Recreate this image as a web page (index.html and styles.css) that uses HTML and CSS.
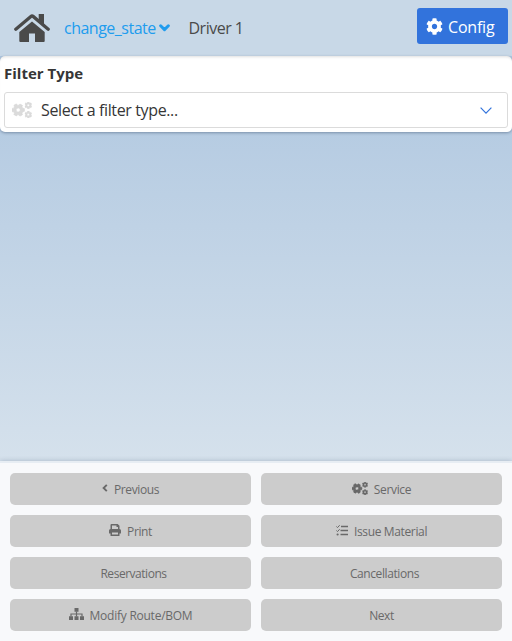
FILE: index.html
```
<!DOCTYPE html>
<html lang="en">
<head>
<meta charset="utf-8">
<title>Driver 1</title>
<link rel="stylesheet" href="styles.css">
</head>
<body>
<svg class="defs" aria-hidden="true">
  <symbol id="cog" viewBox="0 0 512 512"><path d="M487.4 315.7l-42.6-24.6c4.3-23.2 4.3-47 0-70.2l42.6-24.6c4.9-2.8 7.1-8.6 5.5-14-11.1-35.6-30-67.8-54.7-94.6-3.8-4.1-10-5.1-14.8-2.3L380.8 110c-17.9-15.4-38.5-27.3-60.8-35.1V25.8c0-5.6-3.9-10.5-9.4-11.7-36.7-8.2-74.3-7.8-109.2 0-5.5 1.2-9.4 6.1-9.4 11.7V75c-22.2 7.9-42.8 19.8-60.8 35.1L88.7 85.5c-4.9-2.8-11-1.9-14.8 2.3-24.7 26.700-43.600 58.900-54.700 94.600-1.700 5.400.6 11.200 5.500 14L67.300 221c-4.300 23.200-4.300 47 0 70.200l-42.600 24.600c-4.900 2.800-7.100 8.600-5.500 14 11.100 35.600 30 67.800 54.700 94.600 3.800 4.100 10 5.100 14.800 2.300l42.600-24.600c17.900 15.400 38.500 27.300 60.800 35.100v49.200c0 5.600 3.900 10.500 9.400 11.700 36.700 8.200 74.300 7.800 109.200 0 5.500-1.200 9.400-6.100 9.400-11.700v-49.200c22.200-7.900 42.800-19.800 60.800-35.100l42.600 24.600c4.900 2.800 11 1.900 14.800-2.300 24.700-26.700 43.600-58.900 54.700-94.600 1.500-5.500-.7-11.300-5.600-14.100zM256 336c-44.100 0-80-35.900-80-80s35.900-80 80-80 80 35.900 80 80-35.900 80-80 80z"/></symbol>
  <symbol id="cogs" viewBox="0 0 640 512">
    <use class="heavy" href="#cog" x="-10" y="48" width="416" height="416" transform="rotate(30 198 256)"/>
    <use class="heavy" href="#cog" x="402" y="-14" width="240" height="240"/>
    <use class="heavy" href="#cog" x="402" y="286" width="240" height="240"/>
  </symbol>
</svg>
<header class="topbar">
  <svg class="home" viewBox="0 0 36 28"><path d="M24.700 0h5.300v11l-5.300-4.500z"/><path class="roof" d="M1.800 15.200L16.900 2.400q1.100-.9 2.200 0L34.200 15.200"/><path d="M18 7.500L30.700 18V27q0 1-1 1H21v-8.500h-6V28H6.300q-1 0-1-1v-9z"/></svg>
  <a class="state">change_state</a>
  <svg class="caret" viewBox="0 0 10 7"><path d="M1.500 1.500L5 5l3.500-3.500"/></svg>
  <span class="driver">Driver 1</span>
  <button class="config"><svg class="gear"><use href="#cog"/></svg><span>Config</span></button>
</header>
<main class="filter">
  <label class="label">Filter Type</label>
  <div class="select">
    <svg class="filter-icon"><use href="#cogs"/></svg>
    <span class="placeholder">Select a filter type...</span>
    <svg class="chevron" viewBox="0 0 12 7"><path d="M.6.7L6 6.100 11.400.7"/></svg>
  </div>
</main>
<footer class="actions">
  <button class="action"><svg class="prev" viewBox="0 0 6 8"><path d="M4.800.8L1.600 4l3.200 3.200"/></svg><span class="t-previous">Previous</span></button>
  <button class="action"><svg class="cogs"><use href="#cogs"/></svg><span class="t-service">Service</span></button>
  <button class="action"><svg class="print" viewBox="0 0 12 12"><path fill-rule="evenodd" d="M1.500 5V1q0-1 1-1H8.700L10.500 1.800V5Q12 5 12 6.500V9q0 .5-.5.5h-1V11.500q0 .5-.5.5H2q-.5 0-.5-.5v-2h-1Q0 9.500 0 9V6.500Q0 5 1.500 5zM3 1.500V5h6V3H7.500V1.500zM3 8.500v2h6v-2z"/></svg><span class="t-print">Print</span></button>
  <button class="action"><svg class="tasks" viewBox="0 0 12 11"><path d="M5 1.500h7M4.500 5.500H12M4.500 9.500H12"/><path class="ticks" d="M.3 1.400l1.200 1.200L3.700.2M.3 5.400l1.200 1.200 2.200-2.400"/><circle cx="1.600" cy="9.500" r="1.100"/></svg><span class="t-issue">Issue Material</span></button>
  <button class="action no-icon"><span class="t-reservations">Reservations</span></button>
  <button class="action no-icon"><span class="t-cancellations">Cancellations</span></button>
  <button class="action"><svg class="tree" viewBox="0 0 15 12"><path d="M5.500 0h4v3.800h-4zM0 8.200h4V12H0zM5.500 8.200h4V12h-4zM11 8.200h4V12h-4z"/><path class="lines" d="M7.500 3.500v5M2 8.500V6h11v2.500"/></svg><span class="t-modify">Modify Route/BOM</span></button>
  <button class="action"><span class="t-next">Next</span></button>
</footer>
</body>
</html>
```
FILE: styles.css
```
* { box-sizing: border-box; }
body {
  margin: 0;
  height: 641px;
  display: flex;
  flex-direction: column;
  overflow: hidden;
  font-family: "Open Sans", "Noto Sans", sans-serif;
  font-size: 16px;
  line-height: 24px;
  color: #363636;
  background: linear-gradient(#afc7e0 56px, #d5e1ec 461px);
}
button { font: inherit; border: 0; padding: 0; }
svg { display: block; flex: none; fill: currentColor; }
span, a, label { white-space: nowrap; }
.defs { position: absolute; width: 0; height: 0; }
.heavy { stroke: currentColor; stroke-width: 26; }
.topbar {
  height: 56px;
  flex: none;
  display: flex;
  align-items: center;
  padding: 0 4px 0 14px;
  background: #c8d8e7;
  color: #4a4a4a;
}
.home { width: 36px; height: 28px; }
.roof { fill: none; stroke: currentColor; stroke-width: 3.3; stroke-linecap: round; }
.state { width: 92px; margin-left: 14px; color: #209cee; letter-spacing: -.5px; }
.caret { width: 11px; height: 8px; margin-left: 3px; color: #209cee; }
.caret path { fill: none; stroke: currentColor; stroke-width: 2.7; stroke-linecap: round; stroke-linejoin: round; }
.driver { margin-left: 18.5px; letter-spacing: -.5px; }
.config {
  display: flex;
  align-items: center;
  width: 91px;
  height: 36px;
  margin: -4px 0 0 auto;
  padding-left: 9px;
  border-radius: 3px;
  background: #3273dc;
  color: #fff;
}
.config span { margin: 1px 0 0 5px; letter-spacing: -.2px; }
.gear { width: 17px; height: 17px; }
.filter {
  height: 76px;
  flex: none;
  padding: 4px;
  border-radius: 5px;
  background: #fff;
  box-shadow: 0 1px 3px rgba(10, 30, 60, .35), inset 0 3px 3px -2px rgba(0, 0, 0, .13);
}
.label { display: block; height: 32px; line-height: 26px; font-weight: 700; font-size: 15px; }
.select {
  display: flex;
  align-items: center;
  height: 36px;
  padding: 0 15px 0 7px;
  border: 1px solid #dbdbdb;
  border-radius: 3px;
}
.filter-icon { width: 20px; height: 16px; color: #dbdbdb; }
.placeholder { margin-left: 9px; letter-spacing: -.37px; }
.chevron { width: 12px; height: 7px; margin-left: auto; }
.chevron path { fill: none; stroke: #3273dc; stroke-width: 1.2; }
.actions {
  height: 180px;
  flex: none;
  margin-top: auto;
  display: grid;
  grid-template-columns: 1fr 1fr;
  grid-auto-rows: 32px;
  gap: 10px;
  padding: 10px;
  border-top: 2px solid #e7edf3;
  background: #f8f9fb;
  box-shadow: 0 0 5px rgba(10, 30, 70, .22);
}
.action {
  display: flex;
  align-items: center;
  justify-content: center;
  gap: 6px;
  border-radius: 5px;
  background: #ccc;
  color: #696969;
  font-size: 12px;
  line-height: 18px;
}
.no-icon { padding-left: 6px; }
.action span { padding-top: 1px; }
.action svg { margin-top: -2px; }
.t-previous, .t-print, .t-cancellations, .t-next { letter-spacing: -.4px; }
.t-service, .t-issue { letter-spacing: -.35px; }
.t-reservations { letter-spacing: -.47px; }
.t-modify { letter-spacing: -.25px; }
.prev { width: 6px; height: 8px; }
.prev path { fill: none; stroke: currentColor; stroke-width: 1.9; }
.cogs { width: 16px; height: 13px; }
.print { width: 12px; height: 12px; }
.tasks { width: 12px; height: 11px; stroke: currentColor; stroke-width: 1.5; }
.tasks circle { stroke: none; }
.ticks { fill: none; stroke-width: 1; }
.tree { width: 15px; height: 12px; }
.lines { fill: none; stroke: currentColor; stroke-width: 1.2; }
```
